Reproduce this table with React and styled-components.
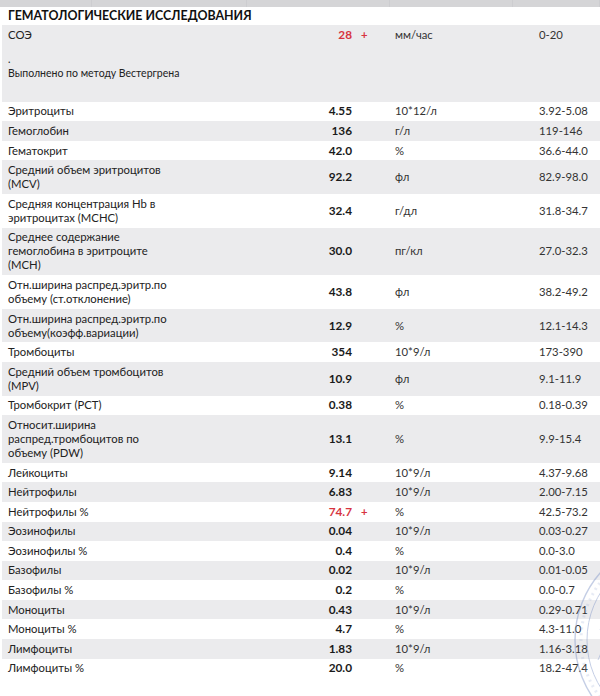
import React from "react";
import styled, { createGlobalStyle } from "styled-components";

const Global = createGlobalStyle`
  html, body { margin: 0; padding: 0; background: #fff; }
  body { font-family: Lato, "Noto Sans", "Liberation Sans", sans-serif; color: #222; }
`;

const Page = styled.div`
  position: relative;
  width: 600px;
  height: 696px;
  overflow: hidden;
  background: #fff;
`;

const TopBar = styled.div`
  height: 7px;
  background: #d5d5d7;
  display: grid;
  grid-template-columns: 92px 155px 143px 123px 1fr;
  & > span { border-right: 1px solid #cdcdd0; }
`;

const Heading = styled.div`
  height: 18px;
  line-height: 18px;
  padding-left: 8px;
  font-size: 12.4px;
  font-weight: 700;
  color: #111;
`;

const Table = styled.div`
  padding-left: 2px;
  display: flex;
  flex-direction: column;
`;

const Row = styled.div`
  display: grid;
  grid-template-columns: 166px 178px 43px 144px 1fr;
  align-items: center;
  padding: 2.8px 0 2.8px 6px;
  background: ${(p) => (p.$shade ? "#ebebed" : "#fff")};
  font-size: 11.3px;
  line-height: 14px;
`;

const Name = styled.div`
  color: #222;
`;

const Value = styled.div`
  text-align: right;
  font-weight: 700;
  font-size: 11.8px;
  color: ${(p) => (p.$high ? "#d7343f" : "#1a1a1a")};
`;

const Flag = styled.div`
  padding-left: 9px;
  color: #d7343f;
  font-weight: 700;
`;

const Unit = styled.div`
  color: #333;
`;

const Range = styled.div`
  color: #333;
`;

const Comment = styled.div`
  grid-column: 1 / -1;
  padding: 10px 0 19px;
  font-size: 10.5px;
  color: #222;
`;

const Stamp = styled.svg`
  position: absolute;
  left: 560px;
  top: 530px;
  width: 240px;
  height: 240px;
  pointer-events: none;
  opacity: 0.45;
`;

const rows = [
  ["Эритроциты", "4.55", "", "10*12/л", "3.92-5.08"],
  ["Гемоглобин", "136", "", "г/л", "119-146"],
  ["Гематокрит", "42.0", "", "%", "36.6-44.0"],
  ["Средний объем эритроцитов (MCV)", "92.2", "", "фл", "82.9-98.0"],
  ["Средняя концентрация Hb в эритроцитах (MCHC)", "32.4", "", "г/дл", "31.8-34.7"],
  ["Среднее содержание гемоглобина в эритроците (MCH)", "30.0", "", "пг/кл", "27.0-32.3"],
  ["Отн.ширина распред.эритр.по объему (ст.отклонение)", "43.8", "", "фл", "38.2-49.2"],
  ["Отн.ширина распред.эритр.по объему(коэфф.вариации)", "12.9", "", "%", "12.1-14.3"],
  ["Тромбоциты", "354", "", "10*9/л", "173-390"],
  ["Средний объем тромбоцитов (MPV)", "10.9", "", "фл", "9.1-11.9"],
  ["Тромбокрит (PCT)", "0.38", "", "%", "0.18-0.39"],
  ["Относит.ширина распред.тромбоцитов по объему (PDW)", "13.1", "", "%", "9.9-15.4"],
  ["Лейкоциты", "9.14", "", "10*9/л", "4.37-9.68"],
  ["Нейтрофилы", "6.83", "", "10*9/л", "2.00-7.15"],
  ["Нейтрофилы %", "74.7", "+", "%", "42.5-73.2"],
  ["Эозинофилы", "0.04", "", "10*9/л", "0.03-0.27"],
  ["Эозинофилы %", "0.4", "", "%", "0.0-3.0"],
  ["Базофилы", "0.02", "", "10*9/л", "0.01-0.05"],
  ["Базофилы %", "0.2", "", "%", "0.0-0.7"],
  ["Моноциты", "0.43", "", "10*9/л", "0.29-0.71"],
  ["Моноциты %", "4.7", "", "%", "4.3-11.0"],
  ["Лимфоциты", "1.83", "", "10*9/л", "1.16-3.18"],
  ["Лимфоциты %", "20.0", "", "%", "18.2-47.4"],
];

export default function App() {
  return (
    <Page>
      <Global />
      <TopBar>
        <span />
        <span />
        <span />
        <span />
        <span />
      </TopBar>
      <Heading>ГЕМАТОЛОГИЧЕСКИЕ ИССЛЕДОВАНИЯ</Heading>
      <Table>
        <Row $shade>
          <Name>СОЭ</Name>
          <Value $high>28</Value>
          <Flag>+</Flag>
          <Unit>мм/час</Unit>
          <Range>0-20</Range>
          <Comment>
            .
            <br />
            Выполнено по методу Вестергрена
          </Comment>
        </Row>
        {rows.map(([n, v, f, u, r], i) => (
          <Row key={n} $shade={i % 2 === 1}>
            <Name>{n}</Name>
            <Value $high={!!f}>{v}</Value>
            <Flag>{f}</Flag>
            <Unit>{u}</Unit>
            <Range>{r}</Range>
          </Row>
        ))}
      </Table>
      <Stamp viewBox="0 0 240 240">
        <circle cx="117" cy="110" r="102" fill="none" stroke="#7f95c8" strokeWidth="1.4" />
        <circle cx="117" cy="110" r="90" fill="none" stroke="#7f95c8" strokeWidth="1" />
        <circle cx="117" cy="110" r="96" fill="none" stroke="#9aabd6" strokeWidth="3" strokeDasharray="2 4" opacity="0.5" />
        <path d="M40 100 L60 60 M38 130 L55 90" stroke="#8ea0d0" strokeWidth="1" fill="none" />
      </Stamp>
    </Page>
  );
}
